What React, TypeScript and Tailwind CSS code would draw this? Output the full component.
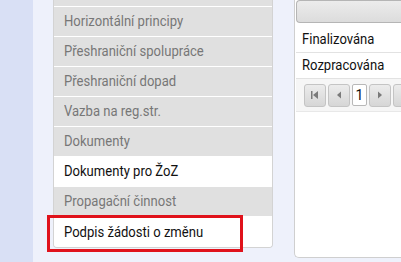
import { ReactNode } from 'react'

const font = { fontFamily: 'Roboto, "Liberation Sans", sans-serif' }

type Item = { label: string; active?: boolean }

const items: Item[] = [
  { label: 'Indikátory' },
  { label: 'Horizontální principy' },
  { label: 'Přeshraniční spolupráce' },
  { label: 'Přeshraniční dopad' },
  { label: 'Vazba na reg.str.' },
  { label: 'Dokumenty' },
  { label: 'Dokumenty pro ŽoZ', active: true },
  { label: 'Propagační činnost' },
  { label: 'Podpis žádosti o změnu', active: true },
]

// úzké písmo – Roboto stažené do šířky
function Narrow({ children }: { children: ReactNode }) {
  return <span className="inline-block origin-left scale-x-[0.87] whitespace-nowrap">{children}</span>
}

function PagerButton({ children }: { children: ReactNode }) {
  return (
    <div className="flex h-[23px] w-[22px] items-center justify-center rounded-[3px] border border-[#c4c4c4] bg-gradient-to-b from-[#ececec] to-[#d6d6d6]">
      {children}
    </div>
  )
}

function App() {
  return (
    <div className="relative flex h-[262px] w-[401px] overflow-hidden bg-[#eef1fb]" style={font}>
      {/* levý okraj */}
      <div className="w-[33px] shrink-0 bg-[#d9e0f5]" />

      {/* menu */}
      <div className="ml-[20px] w-[220px] shrink-0">
        <div className="-mt-[23px] overflow-hidden rounded-b-[4px] border-l border-r border-b border-[#d3d3d3]">
          {items.map((item, i) => (
            <div
              key={item.label}
              className={
                'flex h-[30px] items-center pl-[10px] text-[15px] ' +
                (i < items.length - 1 ? 'border-b border-white ' : '') +
                (item.active ? 'bg-white text-[#111]' : 'bg-[#e0e0e0] text-[#777]')
              }
            >
              <Narrow>{item.label}</Narrow>
            </div>
          ))}
        </div>
      </div>

      {/* pravý panel */}
      <div className="ml-[21px] flex-1">
        <div className="h-[258px] rounded-bl-[5px] border-l border-b border-[#cfcfcf] bg-white pl-[1px]">
          <div className="h-[23px] rounded-l-[4px] border border-r-0 border-[#b5b5b5] bg-gradient-to-b from-[#ececec] to-[#dcdcdc]" />
          <div className="mt-[4px] flex h-[26px] items-center border-b border-[#e2e2e2] pl-[6px] text-[15px] text-[#111]">
            <Narrow>Finalizována</Narrow>
          </div>
          <div className="flex h-[26px] items-center border-b border-[#e2e2e2] pl-[6px] text-[15px] text-[#111]">
            <Narrow>Rozpracována</Narrow>
          </div>
          <div className="flex h-[33px] items-center gap-[2px] border-b border-[#e8e8e8] bg-[#f6f6f6] pl-[8px]">
            <PagerButton>
              <svg width="10" height="10" viewBox="0 0 10 10">
                <rect x="1" y="1" width="1.5" height="8" fill="#7a7a7a" />
                <path d="M8 1 L3 5 L8 9 Z" fill="#7a7a7a" />
              </svg>
            </PagerButton>
            <PagerButton>
              <svg width="10" height="10" viewBox="0 0 10 10">
                <path d="M7 1.5 L3 5 L7 8.5 Z" fill="#7a7a7a" />
              </svg>
            </PagerButton>
            <div className="flex h-[22px] w-[15px] items-center justify-center rounded-[2px] border border-[#b8b8b8] bg-white text-[14px] text-[#111]">
              1
            </div>
            <PagerButton>
              <svg width="10" height="10" viewBox="0 0 10 10">
                <path d="M3 1.5 L7 5 L3 8.5 Z" fill="#7a7a7a" />
              </svg>
            </PagerButton>
            <PagerButton>
              <svg width="10" height="10" viewBox="0 0 10 10">
                <path d="M2 1 L7 5 L2 9 Z" fill="#7a7a7a" />
                <rect x="7.5" y="1" width="1.5" height="8" fill="#7a7a7a" />
              </svg>
            </PagerButton>
          </div>
        </div>
      </div>

      {/* zvýraznění */}
      <div className="pointer-events-none absolute left-[47px] top-[215px] h-[37px] w-[196px] border-[3px] border-[#e0121b]" />
    </div>
  )
}

export default App
